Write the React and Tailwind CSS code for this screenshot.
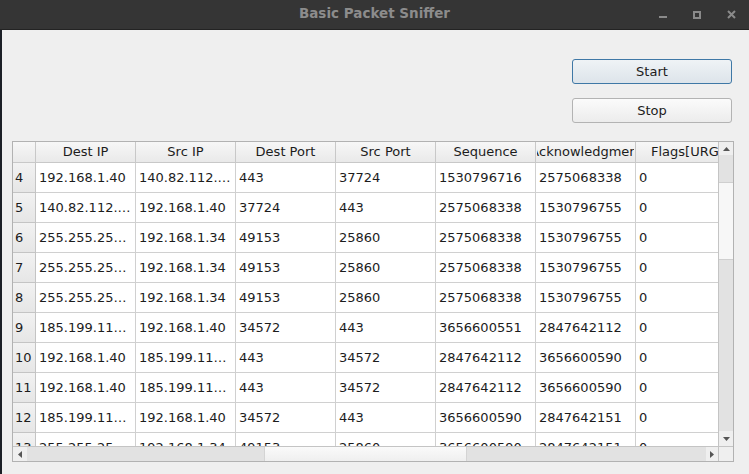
import { useState } from "react";

const columns = ["Dest IP", "Src IP", "Dest Port", "Src Port", "Sequence", "Acknowledgment", "Flags[URG"];

const rows = [
    [4, "192.168.1.40", "140.82.112.…", "443", "37724", "1530796716", "2575068338", "0"],
    [5, "140.82.112.…", "192.168.1.40", "37724", "443", "2575068338", "1530796755", "0"],
    [6, "255.255.25…", "192.168.1.34", "49153", "25860", "2575068338", "1530796755", "0"],
    [7, "255.255.25…", "192.168.1.34", "49153", "25860", "2575068338", "1530796755", "0"],
    [8, "255.255.25…", "192.168.1.34", "49153", "25860", "2575068338", "1530796755", "0"],
    [9, "185.199.11…", "192.168.1.40", "34572", "443", "3656600551", "2847642112", "0"],
    [10, "192.168.1.40", "185.199.11…", "443", "34572", "2847642112", "3656600590", "0"],
    [11, "192.168.1.40", "185.199.11…", "443", "34572", "2847642112", "3656600590", "0"],
    [12, "185.199.11…", "192.168.1.40", "34572", "443", "3656600590", "2847642151", "0"],
    [13, "255.255.25…", "192.168.1.34", "49153", "25860", "3656600590", "2847642151", "0"],
];

const TitleBar = () => (
    <div className="h-[30px] bg-[#353535] border-b border-[#232323] flex items-start relative shrink-0">
        <div className="flex-1 text-center pt-[3px] text-[13.5px] font-bold text-[#8c8c8c]">
            Basic Packet Sniffer
        </div>
        {/* window controls */}
        <div className="absolute top-0 right-0 h-[29px] flex items-center">
            <div className="w-[8px] h-[2px] bg-[#8a8a8a] mt-[4px] mr-[26px]" />
            <div className="w-[8px] h-[8px] border-2 border-[#8a8a8a] mr-[26px]" />
            <svg width="9" height="9" viewBox="0 0 9 9" className="mr-[13px]">
                <path d="M1 1L8 8M8 1L1 8" stroke="#8a8a8a" strokeWidth="2" />
            </svg>
        </div>
    </div>
);

const Arrow = ({ dir }) => {
    const paths = {
        up: "M0 4L3.5 0L7 4Z",
        down: "M0 0L3.5 4L7 0Z",
        left: "M4 0L0 3.5L4 7Z",
        right: "M0 0L4 3.5L0 7Z",
    };
    const vertical = dir === "up" || dir === "down";
    return (
        <svg width={vertical ? 7 : 4} height={vertical ? 4 : 7} viewBox={vertical ? "0 0 7 4" : "0 0 4 7"}>
            <path d={paths[dir]} fill="#555" />
        </svg>
    );
};

const PacketTable = () => (
    <div className="h-[321px] border border-[#b2b2b2] bg-white flex flex-col">
        <div className="flex flex-1 min-h-0">
            <div className="w-[705px] flex flex-col overflow-hidden">
                {/* header */}
                <div className="h-[21px] flex shrink-0 border-b border-[#c8c8c8] bg-gradient-to-b from-[#f7f7f7] to-[#e9e9e9]">
                    <div className="w-[23px] shrink-0 border-r border-[#c8c8c8]" />
                    {columns.map((c, i) => (
                        <div key={c} className="w-[100px] shrink-0 border-r border-[#c8c8c8] flex items-center">
                            <div
                                className={`flex-1 overflow-hidden whitespace-nowrap flex ${i === 6 ? "pl-[15px]" : i === 5 ? "mx-[1px] justify-center pl-[2px]" : "justify-center"}`}
                            >
                                {c}
                            </div>
                        </div>
                    ))}
                </div>
                {/* body */}
                <div className="flex-1 overflow-hidden">
                    {rows.map((r) => (
                        <div key={r[0]} className="h-[30px] flex">
                            <div className="w-[23px] shrink-0 border-r border-b border-[#c4c4c4] bg-gradient-to-b from-[#f2f2f2] to-[#e6e6e6] flex items-center pl-[2px]">
                                {r[0]}
                            </div>
                            {r.slice(1).map((v, i) => (
                                <div key={i} className="w-[100px] shrink-0 border-r border-b border-[#d0d0d0] flex items-center pl-[3px] whitespace-nowrap overflow-hidden">
                                    {v}
                                </div>
                            ))}
                        </div>
                    ))}
                </div>
            </div>
            {/* vertical scrollbar */}
            <div className="w-[15px] border-l border-[#c4c4c4] bg-[#e2e2e2] flex flex-col">
                <div className="h-[13px] bg-[#efefef] flex items-center justify-center shrink-0">
                    <Arrow dir="up" />
                </div>
                <div className="h-[27px] shrink-0" />
                <div className="h-[78px] bg-[#f7f7f7] border-y border-[#cfcfcf] shrink-0" />
                <div className="flex-1" />
                <div className="h-[15px] bg-[#efefef] flex items-center justify-center shrink-0">
                    <Arrow dir="down" />
                </div>
            </div>
        </div>
        {/* horizontal scrollbar */}
        <div className="h-[15px] flex shrink-0 border-t border-[#c4c4c4]">
            <div className="w-[705px] flex bg-[#e2e2e2]">
                <div className="w-[14px] bg-[#efefef] flex items-center justify-center shrink-0">
                    <Arrow dir="left" />
                </div>
                <div className="w-[237px] shrink-0" />
                <div className="w-[203px] bg-gradient-to-b from-[#fafafa] to-[#efefef] border-x border-[#d4d4d4] shrink-0" />
                <div className="flex-1" />
                <div className="w-[12px] bg-[#efefef] flex items-center justify-center shrink-0">
                    <Arrow dir="right" />
                </div>
            </div>
            <div className="flex-1 border-l border-[#c4c4c4] bg-[#efefef]" />
        </div>
    </div>
);

export default function App() {
    const [running, setRunning] = useState(false);

    return (
        <div
            className="w-[749px] h-[474px] bg-[#efefef] flex flex-col overflow-hidden text-[13px] text-[#1c1c1c]"
            style={{ fontFamily: '"DejaVu Sans", sans-serif' }}
        >
            <TitleBar />
            <div className="flex flex-1">
                <div className="w-[2px] bg-[#1b1f26]" />
                <div className="flex-1 flex flex-col pl-[10px] pr-[15px] pt-[29px]">
                    <div className="flex flex-col items-end pr-[2px]">
                        <button
                            onClick={() => setRunning(true)}
                            className="w-[160px] h-[25px] rounded-[3px] border border-[#3f78a6] bg-gradient-to-b from-[#eff3f6] to-[#dde4ea] text-[13px]"
                        >
                            Start
                        </button>
                        <button
                            onClick={() => setRunning(false)}
                            className="w-[160px] h-[25px] mt-[14px] rounded-[3px] border border-[#b3b3b3] bg-gradient-to-b from-[#fbfbfb] to-[#ececec] text-[13px]"
                        >
                            Stop
                        </button>
                    </div>
                    <div className="mt-[18px]">
                        <PacketTable running={running} />
                    </div>
                </div>
            </div>
        </div>
    );
}
